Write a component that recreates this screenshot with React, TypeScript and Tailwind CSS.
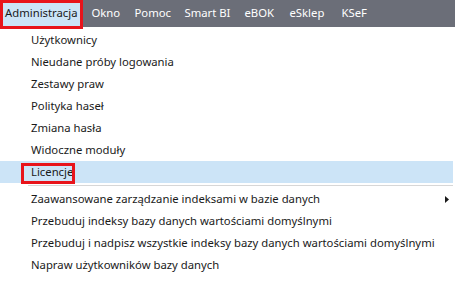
const topItems = [
  { label: 'Okno', cls: 'w-[43px]' },
  { label: 'Pomoc', cls: 'w-[50px]' },
  { label: 'Smart BI', cls: 'w-[60px]' },
  { label: 'eBOK', cls: 'w-[45px]' },
  { label: 'eSklep', cls: 'w-[52px]' },
  { label: 'KSeF', cls: '' },
];

const firstGroup = [
  'Użytkownicy',
  'Nieudane próby logowania',
  'Zestawy praw',
  'Polityka haseł',
  'Zmiana hasła',
  'Widoczne moduły',
];

const secondGroup = [
  'Przebuduj indeksy bazy danych wartościami domyślnymi',
  'Przebuduj i nadpisz wszystkie indeksy bazy danych wartościami domyślnymi',
  'Napraw użytkowników bazy danych',
];

export default function App() {
  return (
    <div className="w-[455px] h-[281px] bg-white overflow-hidden whitespace-nowrap text-[11.3px] text-[#1a1a1a] font-['Noto_Sans',sans-serif]">
      <div className="h-[27px] bg-[#6b6e78] flex items-center text-white">
        <div className="relative h-full flex items-center px-[5px] bg-[#cce4f7] text-[#1a1a1a]">
          Administracja
          <div className="absolute left-0 top-0 w-[83px] h-[29px] border-[3px] border-[#e8141b]" />
        </div>
        <div className="flex items-center ml-[9px]">
          {topItems.map((t) => (
            <span key={t.label} className={t.cls}>{t.label}</span>
          ))}
        </div>
      </div>

      <div className="pt-[2px]">
        {firstGroup.map((t) => (
          <div key={t} className="h-[22px] flex items-center pl-[31px]">{t}</div>
        ))}
        <div className="h-[22px] flex items-center pl-[31px] bg-[#cce4f7] mr-[2px] relative">
          Licencje
          <div className="absolute left-[21px] top-[2px] w-[54px] h-[21px] border-[3px] border-[#e8141b]" />
        </div>
        <div className="h-[5px] flex items-center pl-[28px] pr-[2px]">
          <div className="h-px w-full bg-[#d7d7d7]" />
        </div>
        <div className="h-[22px] flex items-center pl-[31px] pr-[6px] justify-between">
          <span>Zaawansowane zarządzanie indeksami w bazie danych</span>
          <svg width="4" height="7" viewBox="0 0 4 7">
            <path d="M0 0 L4 3.5 L0 7 Z" fill="#1a1a1a" />
          </svg>
        </div>
        {secondGroup.map((t) => (
          <div key={t} className="h-[22px] flex items-center pl-[31px]">{t}</div>
        ))}
      </div>
    </div>
  );
}
